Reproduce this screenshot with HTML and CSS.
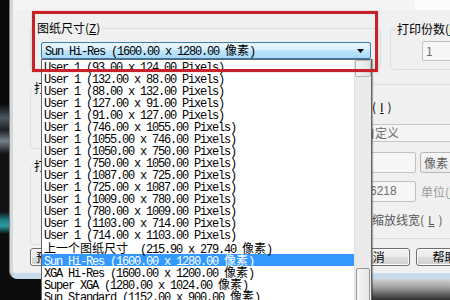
FILE: index.html
```html
<!DOCTYPE html>
<html lang="zh-CN">
<head>
  <meta charset="UTF-8" />
  <meta name="viewport" content="width=device-width, initial-scale=1" />
  <title>打印 - 图纸尺寸</title>
  <link rel="stylesheet" href="styles.css">
</head>
<body>
  <div class="desktop">
    <div class="desk-left"></div>

    <div class="window">
      <div class="topstrip"><span class="topstrip-tab"></span></div>

      <div class="row row-a">
        <fieldset class="group g-size">
          <legend>图纸尺寸(<u>Z</u>)</legend>
          <div class="combo">
            <span>Sun Hi-Res (1600.00 x 1280.00 <span class="cjk">像素</span>)</span>
            <svg class="arrow" width="7" height="4" viewBox="0 0 7 4"><path d="M0 0h7L3.5 4z" fill="#000"/></svg>
          </div>
        </fieldset>
        <fieldset class="group g-copies">
          <legend>打印份数(<u>B</u>)</legend>
          <div class="spin">1</div>
        </fieldset>
      </div>

      <div class="row row-b">
        <div class="col-left">
          <fieldset class="group g-area">
            <legend>打印区域</legend>
          </fieldset>
          <fieldset class="group g-offset">
            <legend>打印偏移</legend>
          </fieldset>
        </div>

        <fieldset class="group g-scale">
          <legend>打印比例</legend>
          <label class="check check-fit"><span class="box"></span>布满图纸(<u>I</u>)</label>
          <div class="scale-row">
            <span class="scale-label"></span>
            <div class="select muted">自定义</div>
          </div>
          <div class="unit-row">
            <div class="textbox"></div>
            <div class="select select-unit">像素</div>
          </div>
          <div class="unit-row">
            <div class="textbox muted">6218</div>
            <span class="unit-label">单位(<u>N</u>)</span>
          </div>
          <label class="check check-lw"><span class="box"></span>缩放线宽(<u>L</u>)</label>
        </fieldset>
      </div>

      <div class="row row-c">
        <button class="btn btn-preview">预览(<u>P</u>)...</button>
        <button class="btn btn-ok">确定</button>
        <button class="btn">取消</button>
        <button class="btn">帮助(<u>H</u>)</button>
      </div>
    </div>

    <!-- opened paper size list, drawn over the dialog -->
    <div class="droplist">
      <div class="items">
        <div class="item">User 1 (93.00 x 124.00 Pixels)</div>
        <div class="item">User 1 (132.00 x 88.00 Pixels)</div>
        <div class="item">User 1 (88.00 x 132.00 Pixels)</div>
        <div class="item">User 1 (127.00 x 91.00 Pixels)</div>
        <div class="item">User 1 (91.00 x 127.00 Pixels)</div>
        <div class="item">User 1 (746.00 x 1055.00 Pixels)</div>
        <div class="item">User 1 (1055.00 x 746.00 Pixels)</div>
        <div class="item">User 1 (1050.00 x 750.00 Pixels)</div>
        <div class="item">User 1 (750.00 x 1050.00 Pixels)</div>
        <div class="item">User 1 (1087.00 x 725.00 Pixels)</div>
        <div class="item">User 1 (725.00 x 1087.00 Pixels)</div>
        <div class="item">User 1 (1009.00 x 780.00 Pixels)</div>
        <div class="item">User 1 (780.00 x 1009.00 Pixels)</div>
        <div class="item">User 1 (1103.00 x 714.00 Pixels)</div>
        <div class="item">User 1 (714.00 x 1103.00 Pixels)</div>
        <div class="item"><span class="cjk">上一个图纸尺寸</span>  (215.90 x 279.40 <span class="cjk">像素</span>)</div>
        <div class="item selected">Sun Hi-Res (1600.00 x 1280.00 <span class="cjk">像素</span>)</div>
        <div class="item">XGA Hi-Res (1600.00 x 1200.00 <span class="cjk">像素</span>)</div>
        <div class="item">Super XGA (1280.00 x 1024.00 <span class="cjk">像素</span>)</div>
        <div class="item">Sun Standard (1152.00 x 900.00 <span class="cjk">像素</span>)</div>
      </div>
      <div class="vscroll">
        <span class="vscroll-btn"></span>
        <span class="vscroll-thumb"></span>
        <span class="vscroll-btn"></span>
      </div>
    </div>

    <!-- red annotation frame -->
    <div class="highlight"></div>
  </div>
</body>
</html>
```

FILE: styles.css
```css
* {
  box-sizing: border-box;
  margin: 0;
  padding: 0;
}

body {
  width: 450px;
  height: 300px;
  overflow: hidden;
  background: #0d0d0d;
  font-family: "Noto Sans CJK SC", "Liberation Sans", sans-serif;
  font-size: 12px;
  color: #111;
}

.desktop {
  position: relative;
  display: flex;
  width: 450px;
  height: 300px;
  overflow: hidden;
  background: linear-gradient(#d4d4d4, #a0a0a0 40%, #2e2e2e) no-repeat right bottom / 80px 21px, #0d0d0d;
}

.desk-left {
  flex: none;
  width: 10px;
  background: linear-gradient(180deg,
    #0a0a0a 0, #0a0a0a 104px, #4d5862 118px, #1c2024 130px, #76808a 141px,
    #101214 154px, #101214 212px, #1f7d84 220px, #2c9aa0 226px, #0d0d0d 234px, #0d0d0d 100%);
}

/* dialog window */
.window {
  flex: none;
  width: 480px;
  height: 279px;
  overflow: hidden;
  background: #f0f0f0;
  border-left: 3px solid #d5d8db;
  border-bottom: 6px solid #c8dbec;
  border-bottom-left-radius: 8px;
  box-shadow: -1px 0 0 #7a7a7a;
}

.topstrip {
  display: flex;
  justify-content: flex-end;
  height: 10px;
  background: #f4f4f4;
}

.topstrip-tab {
  width: 75px;
  background: #fcfcfc;
}

.row {
  display: flex;
  align-items: flex-start;
  padding-left: 17px;
}

.row-a {
  margin-top: 10px;
}

/* group boxes */
.group {
  border: 1px solid #d5dfe5;
  border-radius: 3px;
  min-width: 0;
}

.group legend {
  padding: 0 2px;
  line-height: 16px;
  color: #000;
}

.g-size {
  width: 351px;
  height: 49px;
  padding: 6px 9px 0 10px;
}

.g-size legend {
  margin-left: -6px;
}

.g-copies {
  width: 100px;
  height: 49px;
  margin: 1px 0 0 9px;
  padding: 4px 0 0 31px;
}

.g-copies legend {
  margin-left: -27px;
}

.combo {
  display: flex;
  align-items: center;
  justify-content: space-between;
  width: 330px;
  height: 17px;
  padding: 0 6px 0 3px;
  border: 1px solid #3c7fb1;
  border-radius: 2px;
  background: linear-gradient(#eaf6fd, #d9f0fc 45%, #bee6fd 50%, #a7d9f5);
  font: 12px/12px "Liberation Mono", monospace;
  letter-spacing: -1.2px;
  white-space: pre;
  color: #000;
}

.spin {
  width: 60px;
  height: 20px;
  padding-left: 3px;
  border: 1px solid #c2c2c2;
  border-radius: 2px;
  background: #f6f6f6;
  line-height: 18px;
  color: #6d6d6d;
}

.col-left {
  width: 226px;
  margin-top: 10px;
}

.g-area {
  height: 69px;
  padding-left: 1px;
}

.g-offset {
  height: 87px;
  margin-top: 9px;
  padding-left: 1px;
}

.g-scale {
  width: 230px;
  height: 163px;
  margin: 6px 0 0 6px;
  padding: 7px 0 0 10px;
}

.check {
  display: flex;
  align-items: center;
  gap: 4px;
  height: 16px;
  line-height: 16px;
  color: #000;
}

.check .box {
  width: 13px;
  height: 13px;
  border: 1px solid #8f8f8f;
  background: linear-gradient(#f4f4f4, #fff);
}

.check-fit {
  padding-left: 35px;
}

.check-lw {
  margin-top: 10px;
  padding-left: 83px;
  color: #555;
}

.scale-row {
  display: flex;
  align-items: center;
  margin-top: 9px;
}

.scale-label {
  width: 87px;
}

.select {
  height: 18px;
  padding-left: 3px;
  border: 1px solid #c6c6c6;
  border-radius: 2px;
  background: #f4f4f4;
  line-height: 16px;
  flex: 1;
}

.select-unit {
  flex: none;
  width: 50px;
  height: 21px;
  margin-left: 4px;
  border-color: #b5b5b5;
  border-radius: 3px;
  background: linear-gradient(#f6f6f6, #ececec);
  line-height: 19px;
  color: #5e5e5e;
}

.unit-row {
  display: flex;
  align-items: center;
  margin-top: 10px;
  padding-left: 93px;
}

.unit-row + .unit-row {
  margin-top: 8px;
}

.textbox {
  width: 51px;
  height: 21px;
  padding-left: 4px;
  border: 1px solid #c2c2c2;
  border-radius: 2px;
  background: #f6f6f6;
  line-height: 19px;
  font-family: "Liberation Sans", sans-serif;
}

.unit-label {
  margin-left: 5px;
  color: #9a9a9a;
}

.muted {
  color: #6d6d6d;
}

/* bottom buttons */
.row-c {
  margin-top: 3px;
}

.btn {
  width: 75px;
  height: 18px;
  border: 1px solid #707070;
  border-radius: 3px;
  background: linear-gradient(#f2f2f2, #ebebeb 50%, #dddddd 50%, #cfcfcf);
  box-shadow: inset 0 0 0 1px #fbfbfb;
  font: 12px/16px "Noto Sans CJK SC", sans-serif;
  color: #000;
  margin-left: 6px;
}

.btn-preview {
  margin-left: 0;
  padding-left: 5px;
  text-align: left;
}

.btn-ok {
  margin-left: 151px;
}

/* open drop-down list */
.droplist {
  position: absolute;
  left: 41px;
  top: 59px;
  display: flex;
  width: 331px;
  height: 261px;
  border: 1px solid #646464;
  background: #fff;
  box-shadow: 1px 0 1px rgba(0, 0, 0, 0.3);
}

.items {
  flex: 1;
  padding-top: 2px;
  overflow: hidden;
  font: 12px/12px "Liberation Mono", monospace;
  letter-spacing: -1.2px;
  color: #000;
}

.item {
  height: 12px;
  padding-left: 2px;
  white-space: pre;
}

.item.selected {
  background: #3399ff;
  color: #fff;
}

.cjk {
  font-family: "Noto Sans CJK SC", sans-serif;
  letter-spacing: 0;
}

.vscroll {
  display: flex;
  flex-direction: column;
  width: 17px;
  background: #eaeaea;
  border-left: 1px solid #e2e2e2;
}

.vscroll-btn {
  height: 17px;
  border: 1px solid #b4b4b4;
  border-radius: 2px;
  background: linear-gradient(to right, #f5f5f5, #e2e2e2);
}

.vscroll-thumb {
  height: 34px;
  margin: auto 1px 0;
  border: 1px solid #979797;
  border-radius: 2px;
  background: linear-gradient(to right, #f6f6f6, #e6e6e6);
}

/* red annotation */
.highlight {
  position: absolute;
  left: 32px;
  top: 11px;
  width: 346px;
  height: 61px;
  border: 3px solid #c7222a;
  box-shadow: 0 0 1px rgba(199, 34, 42, 0.6);
}
```
